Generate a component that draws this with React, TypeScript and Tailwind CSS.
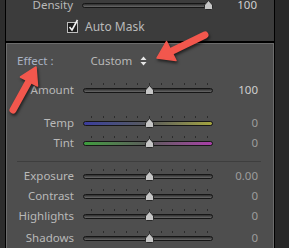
import React from "react";

const ticks = [8, 19.6, 31.2, 42.8, 54.4, 66, 77.6, 89.2, 100.8, 112.4, 124];

function Slider({ pos, track }: { pos: number; track?: string }) {
  return (
    <div className="relative h-[20px] w-[130px] shrink-0">
      {ticks.map((t) => (
        <div key={t} className="absolute top-[3px] h-[2px] w-px bg-[#2c2c2c]" style={{ left: t }} />
      ))}
      <div
        className={
          "absolute left-0 right-0 top-[8px] h-[5px] rounded-full border border-[#161616] " +
          (track ?? "bg-gradient-to-b from-[#2e2e2e] to-[#6a6a6a]")
        }
      />
      <svg className="absolute top-[5px]" style={{ left: pos - 5 }} width="11" height="10" viewBox="0 0 11 10">
        <path d="M5.5 0.5 L9.5 5 L9.5 8.5 Q9.5 9.5 8.5 9.5 L2.5 9.5 Q1.5 9.5 1.5 8.5 L1.5 5 Z" fill="#c6c6c6" stroke="#2a2a2a" strokeWidth="1" />
      </svg>
    </div>
  );
}

function Row({
  label,
  value,
  pos = 66,
  track,
  dim,
  className = "",
}: {
  label: string;
  value: string;
  pos?: number;
  track?: string;
  dim?: boolean;
  className?: string;
}) {
  return (
    <div className={"flex h-[20px] items-center " + className}>
      <div className="w-[67px] text-right">{label}</div>
      <div className="ml-[9px]">
        <Slider pos={pos} track={track} />
      </div>
      <div className={"w-[45px] text-right " + (dim ? "text-[#9c9c9c]" : "text-[#cfcfcf]")}>{value}</div>
    </div>
  );
}

export default function App() {
  return (
    <div
      className="relative flex h-[248px] w-[289px] overflow-hidden bg-[#262626] text-[11.5px] text-[#b9b9b9]"
      style={{ fontFamily: '"Noto Sans", "Liberation Sans", sans-serif' }}
    >
      {/* left edge */}
      <div className="w-[6px] shrink-0 border-r border-black bg-[#2d2d2d]" />

      <div className="flex w-[268px] shrink-0 flex-col">
        {/* upper panel */}
        <div className="h-[42px] bg-[#3c3c3c]">
          <Row label="Density" value="100" pos={126} className="-mt-[5px]" />
          <div className="mt-[1px] flex items-center">
            <svg className="ml-[61px]" width="12" height="14" viewBox="0 0 12 14">
              <rect x="0.5" y="3.5" width="10" height="10" fill="#1c1c1c" stroke="#bdbdbd" />
              <path d="M2.5 8 L5 11 L10.5 1" fill="none" stroke="#f0f0f0" strokeWidth="1.6" />
            </svg>
            <span className="ml-[6px] mt-[2px] text-[12px]">Auto Mask</span>
          </div>
        </div>
        <div className="h-[2px] bg-black" />

        {/* basic panel */}
        <div className="flex-1 border border-b-0 border-[#6c6c6c] bg-[#4e4e4e]">
          <div className="mt-[7px] flex h-[20px] items-center">
            <span className="ml-[10px] text-[#aab3c4]">Effect :</span>
            <span className="ml-[37px]">Custom</span>
            <svg className="ml-[8px]" width="7" height="10" viewBox="0 0 7 10">
              <path d="M0.5 4 L3.5 0.5 L6.5 4 Z M0.5 6 L3.5 9.5 L6.5 6 Z" fill="#e6e6e6" />
            </svg>
          </div>
          <Row label="Amount" value="100" className="mt-[9px]" />
          <Row
            label="Temp"
            value="0"
            dim
            className="mt-[13px]"
            track="bg-gradient-to-r from-[#3c3c9c] via-[#5a5a5a] to-[#a4a43c]"
          />
          <Row label="Tint" value="0" dim track="bg-gradient-to-r from-[#3c9c3c] via-[#5a5a5a] to-[#a83ca8]" />
          <div className="ml-[10px] mr-[12px] mt-[8px] h-px bg-[#3e3e3e]" />
          <Row label="Exposure" value="0.00" dim className="mt-[4px]" />
          <Row label="Contrast" value="0" dim />
          <Row label="Highlights" value="0" dim />
          <Row label="Shadows" value="0" dim className="mt-[2px]" />
        </div>
      </div>

      {/* right edge */}
      <div className="flex-1 border-l border-black bg-[#282828]" />

      {/* annotation arrows */}
      <svg
        className="pointer-events-none absolute inset-0 drop-shadow-[1px_2px_1.5px_rgba(0,0,0,0.6)]"
        width="289"
        height="248"
        viewBox="0 0 289 248"
      >
        <line x1="205" y1="35" x2="172" y2="51" stroke="#f2574d" strokeWidth="7" strokeLinecap="round" />
        <polygon points="157,58 166.5,41.5 176,60.5" fill="#f2574d" strokeLinejoin="round" stroke="#f2574d" strokeWidth="1.5" />
        <line x1="13" y1="110" x2="29" y2="81" stroke="#f2574d" strokeWidth="7" strokeLinecap="round" />
        <polygon points="36,67 20.5,77 37.5,86" fill="#f2574d" strokeLinejoin="round" stroke="#f2574d" strokeWidth="1.5" />
      </svg>
    </div>
  );
}
